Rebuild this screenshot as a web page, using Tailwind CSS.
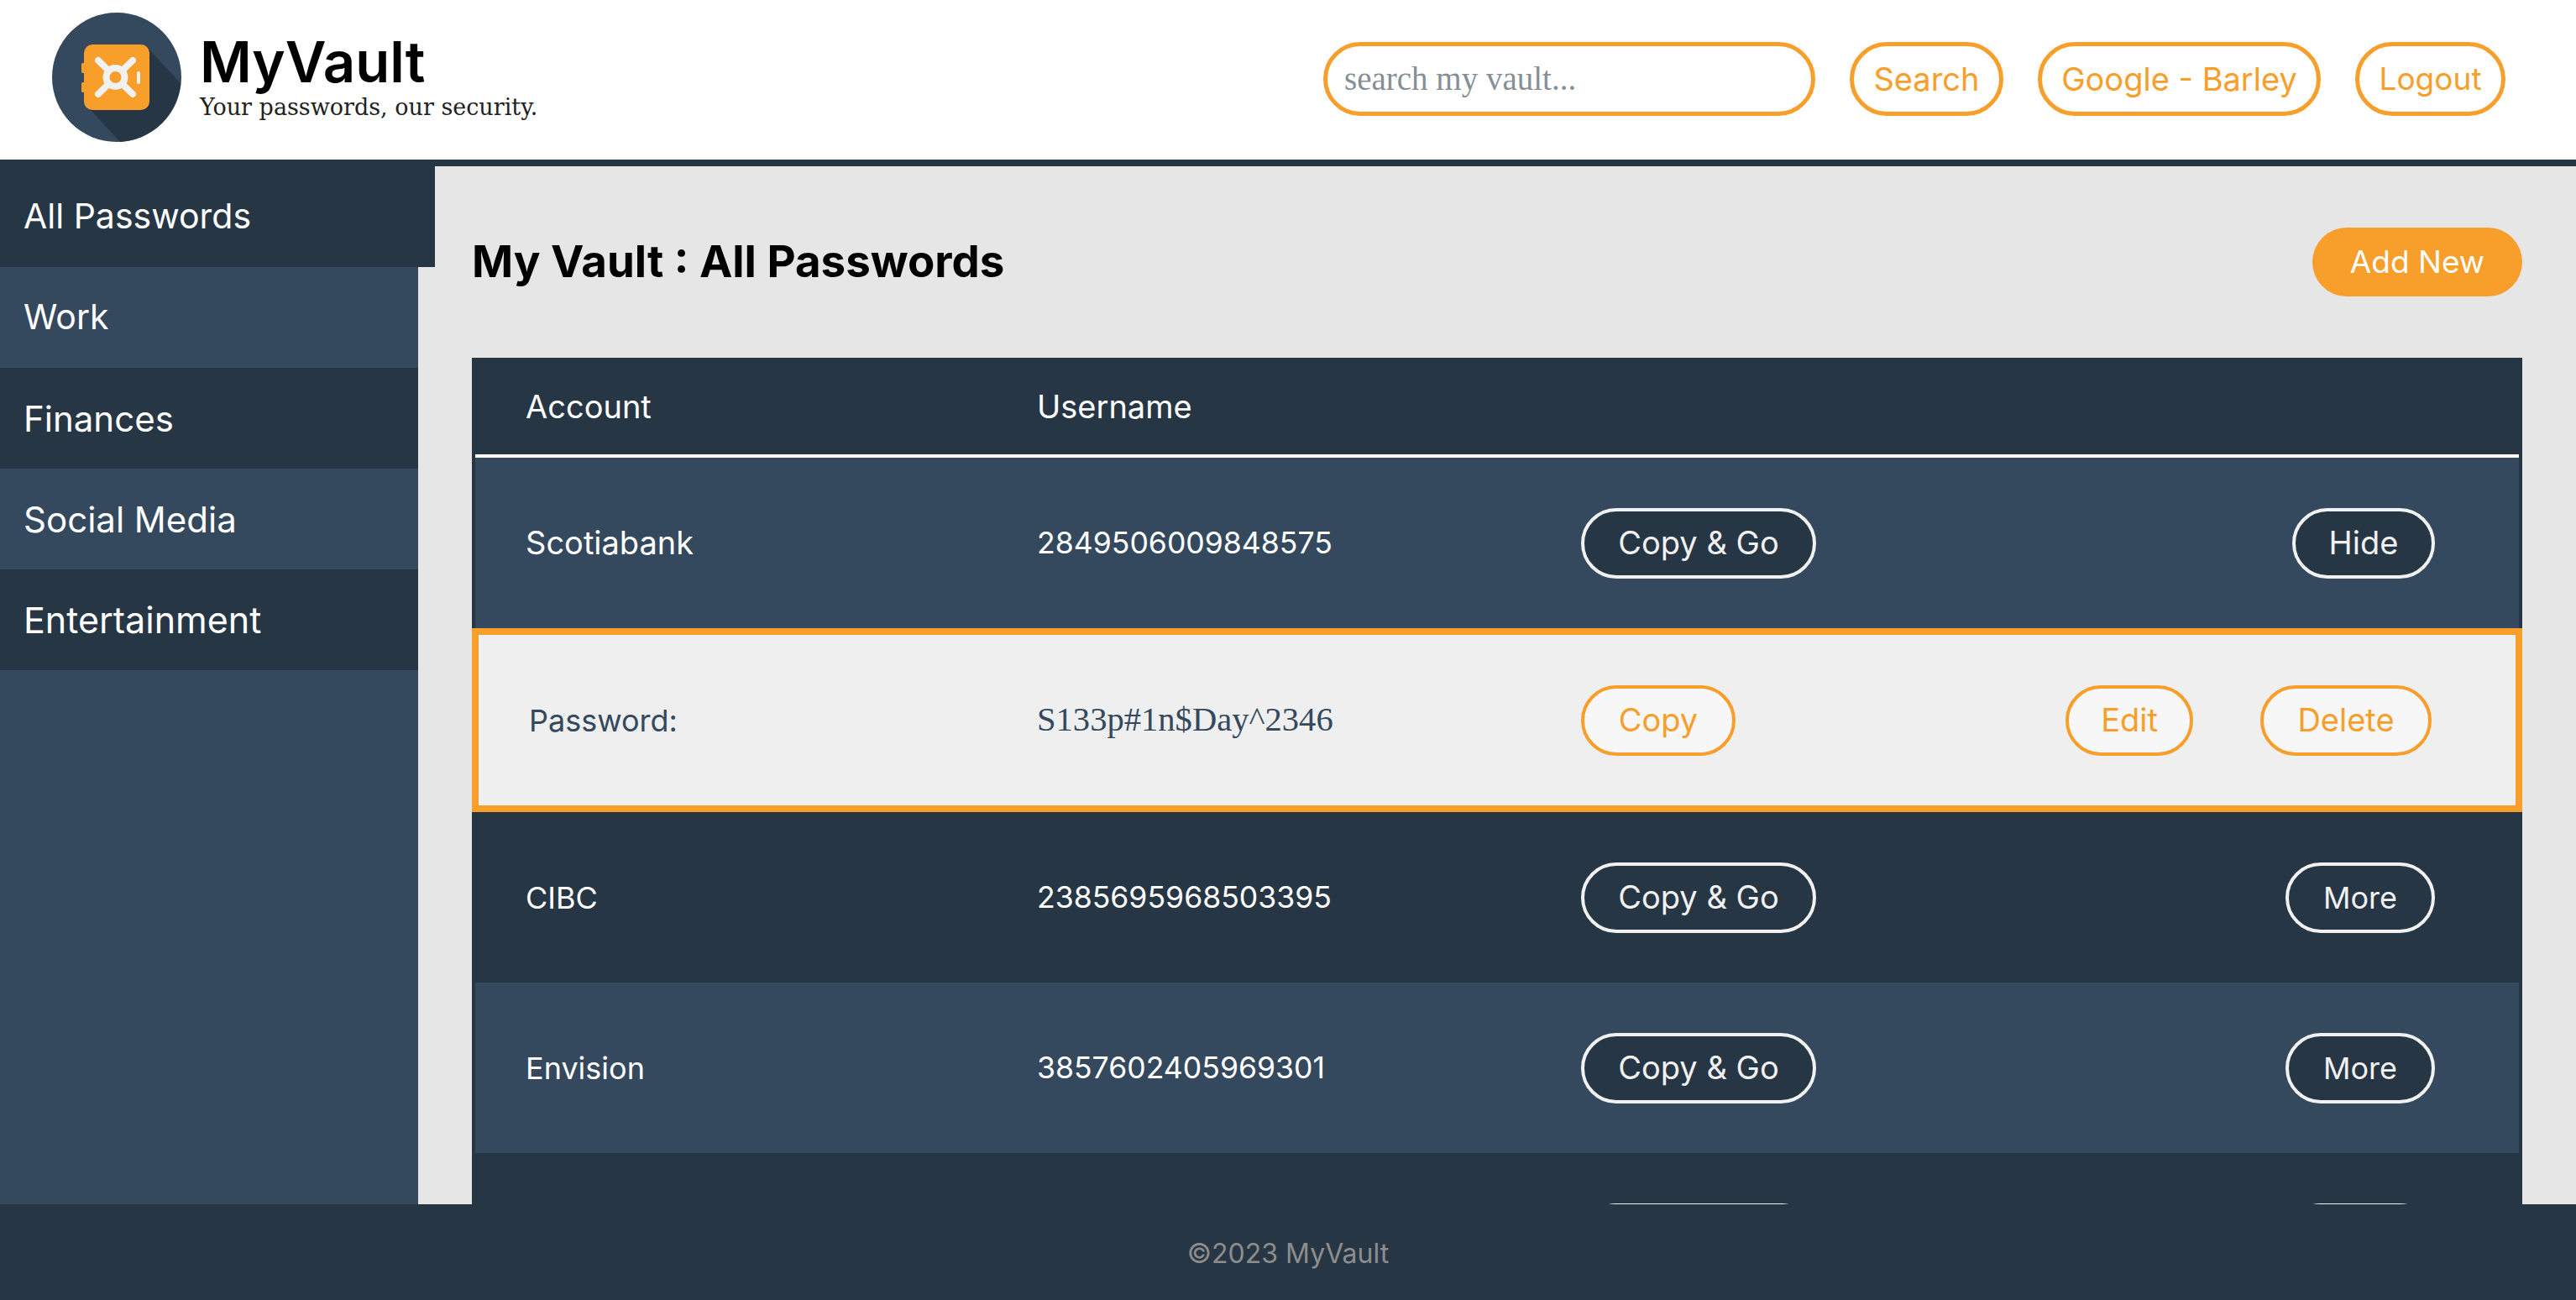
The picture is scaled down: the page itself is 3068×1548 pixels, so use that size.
<!DOCTYPE html>
<html lang="en">
<head>
    <meta charset="UTF-8">
    <title>MyVault</title>
    <script src="https://cdn.jsdelivr.net/npm/@tailwindcss/browser@4"></script>
</head>
<body class="h-screen flex flex-col overflow-hidden bg-[#e6e6e6] font-['Inter','Liberation_Sans',sans-serif]">

    <header class="h-[198px] shrink-0 bg-white border-b-8 border-[#273645] flex items-center justify-between pl-[62px] pr-[84px] pb-[2px]">
        <div class="flex items-center gap-[22px] pb-[5px]">
            <svg class="w-[154px] h-[154px]" viewBox="0 0 154 154">
                <circle cx="77" cy="77" r="77" fill="#34495e"/>
                <path d="M114 42 L153 84 A77 77 0 0 1 81 153.9 L46 116 Z" fill="#273645"/>
                <rect x="35" y="60" width="6" height="12" rx="1.5" fill="#f79e2b"/>
                <rect x="35" y="83" width="6" height="12" rx="1.5" fill="#f79e2b"/>
                <rect x="38" y="38" width="78" height="78" rx="10" fill="#f79e2b"/>
                <g stroke="#f1f1f1" stroke-width="8" stroke-linecap="round" fill="none">
                    <path d="M55 57 L96 97 M96 57 L55 97"/>
                    <path d="M103 72 V83" stroke-width="4"/>
                </g>
                <circle cx="75.5" cy="77" r="11" fill="#f79e2b" stroke="#f1f1f1" stroke-width="8"/>
            </svg>
            <div class="flex flex-col pt-[2px]">
                <span class="text-[67px] leading-[64px] font-semibold text-black">MyVault</span>
                <span class="mt-[6px] text-[27px] leading-[32px] text-[#222] font-['DejaVu_Serif',serif]">Your passwords, our security.</span>
            </div>
        </div>
        <div class="flex items-center gap-[41px] text-[38px] text-[#f79e2b]">
            <div class="w-[586px] h-[88px] rounded-full border-[5px] border-[#f79e2b] flex items-center px-[20px] text-[39px] text-[#868e96] font-['Liberation_Serif',serif]">search my vault...</div>
            <button class="h-[88px] w-[183px] rounded-full border-[5px] border-[#f79e2b]">Search</button>
            <button class="h-[88px] w-[337px] rounded-full border-[5px] border-[#f79e2b]">Google - Barley</button>
            <button class="h-[88px] w-[179px] rounded-full border-[5px] border-[#f79e2b] text-[37px]">Logout</button>
        </div>
    </header>

    <div class="flex-1 flex min-h-0">
        <nav class="w-[498px] shrink-0 bg-[#34495e] text-white text-[41px]">
            <div class="w-[518px] h-[120px] bg-[#273645] flex items-center pl-[28px]">All Passwords</div>
            <div class="h-[120px] bg-[#34495e] flex items-center pl-[28px]">Work</div>
            <div class="h-[120px] bg-[#273645] flex items-center pl-[28px] text-[42px]">Finances</div>
            <div class="h-[120px] bg-[#34495e] flex items-center pl-[28px] text-[42px]">Social Media</div>
            <div class="h-[120px] bg-[#273645] flex items-center pl-[28px] text-[43px]">Entertainment</div>
        </nav>

        <main class="flex-1 min-w-0 overflow-hidden pl-[64px] pr-[64px]">
            <div class="h-[228px] flex items-center justify-between">
                <h1 class="text-[52.8px] font-bold text-black">My Vault : All Passwords</h1>
                <button class="h-[82px] w-[250px] rounded-full bg-[#f79e2b] text-white text-[37px]">Add New</button>
            </div>

            <div class="bg-[#273645] text-white text-[38px] p-[4px]">
                <div class="h-[115px] border-b-[4px] border-white flex items-center pb-[3px]">
                    <span class="w-[669px] pl-[60px]">Account</span><span>Username</span>
                </div>
                <div class="h-[203px] bg-[#34495e] flex items-center justify-between pr-[100px]">
                    <div class="flex items-center">
                        <span class="w-[669px] pl-[60px]">Scotiabank</span>
                        <span class="w-[648px] text-[35.6px]">2849506009848575</span>
                        <button class="h-[84px] w-[280px] rounded-full border-[4px] border-[#f1f1f1] bg-[#273645] text-[#f1f1f1]">Copy &amp; Go</button>
                    </div>
                    <button class="h-[84px] w-[170px] rounded-full border-[4px] border-[#f1f1f1] bg-[#273645] text-[#f1f1f1]">Hide</button>
                </div>
                <div class="h-[219px] -mx-[4px] bg-[#efefef] border-[8px] border-[#f79e2b] flex items-center justify-between pr-[100px] text-[#34495e]">
                    <div class="flex items-center">
                        <span class="w-[665px] pl-[60px] text-[36px]">Password:</span>
                        <span class="w-[648px] font-['Liberation_Serif',serif] text-[40.6px]">S133p#1n$Day^2346</span>
                        <button class="h-[84px] w-[184px] rounded-full border-[4px] border-[#f79e2b] bg-[#f7f7f7] text-[#f79e2b]">Copy</button>
                    </div>
                    <div class="flex gap-[80px] text-[#f79e2b]">
                        <button class="h-[84px] w-[152px] rounded-full border-[4px] border-[#f79e2b] bg-[#f7f7f7]">Edit</button>
                        <button class="h-[84px] w-[204px] rounded-full border-[4px] border-[#f79e2b] bg-[#f7f7f7]">Delete</button>
                    </div>
                </div>
                <div class="h-[203px] flex items-center justify-between pr-[100px]">
                    <div class="flex items-center">
                        <span class="w-[669px] pl-[60px] text-[36px]">CIBC</span>
                        <span class="w-[648px] text-[35.6px]">2385695968503395</span>
                        <button class="h-[84px] w-[280px] rounded-full border-[4px] border-[#f1f1f1] bg-[#273645] text-[#f1f1f1]">Copy &amp; Go</button>
                    </div>
                    <button class="h-[84px] w-[178px] rounded-full border-[4px] border-[#f1f1f1] bg-[#273645] text-[#f1f1f1] text-[36px]">More</button>
                </div>
                <div class="h-[203px] bg-[#34495e] flex items-center justify-between pr-[100px]">
                    <div class="flex items-center">
                        <span class="w-[669px] pl-[60px] text-[36px]">Envision</span>
                        <span class="w-[648px] text-[35.6px]">3857602405969301</span>
                        <button class="h-[84px] w-[280px] rounded-full border-[4px] border-[#f1f1f1] bg-[#273645] text-[#f1f1f1]">Copy &amp; Go</button>
                    </div>
                    <button class="h-[84px] w-[178px] rounded-full border-[4px] border-[#f1f1f1] bg-[#273645] text-[#f1f1f1] text-[36px]">More</button>
                </div>
                <!-- next row is scrolled under the footer, only the button tops show -->
                <div class="h-[203px] flex items-center justify-between pr-[100px]">
                    <div class="flex items-center">
                        <span class="w-[669px]"></span>
                        <span class="w-[648px]"></span>
                        <button class="h-[84px] w-[280px] rounded-full border-[4px] border-[#f1f1f1] bg-[#273645]"></button>
                    </div>
                    <button class="h-[84px] w-[178px] rounded-full border-[4px] border-[#f1f1f1] bg-[#273645]"></button>
                </div>
            </div>
        </main>
    </div>

    <footer class="h-[114px] shrink-0 bg-[#273645] flex items-center justify-center text-[32px] text-[#8d8d8d] pt-[4px]">©2023 MyVault</footer>
</body>
</html>
